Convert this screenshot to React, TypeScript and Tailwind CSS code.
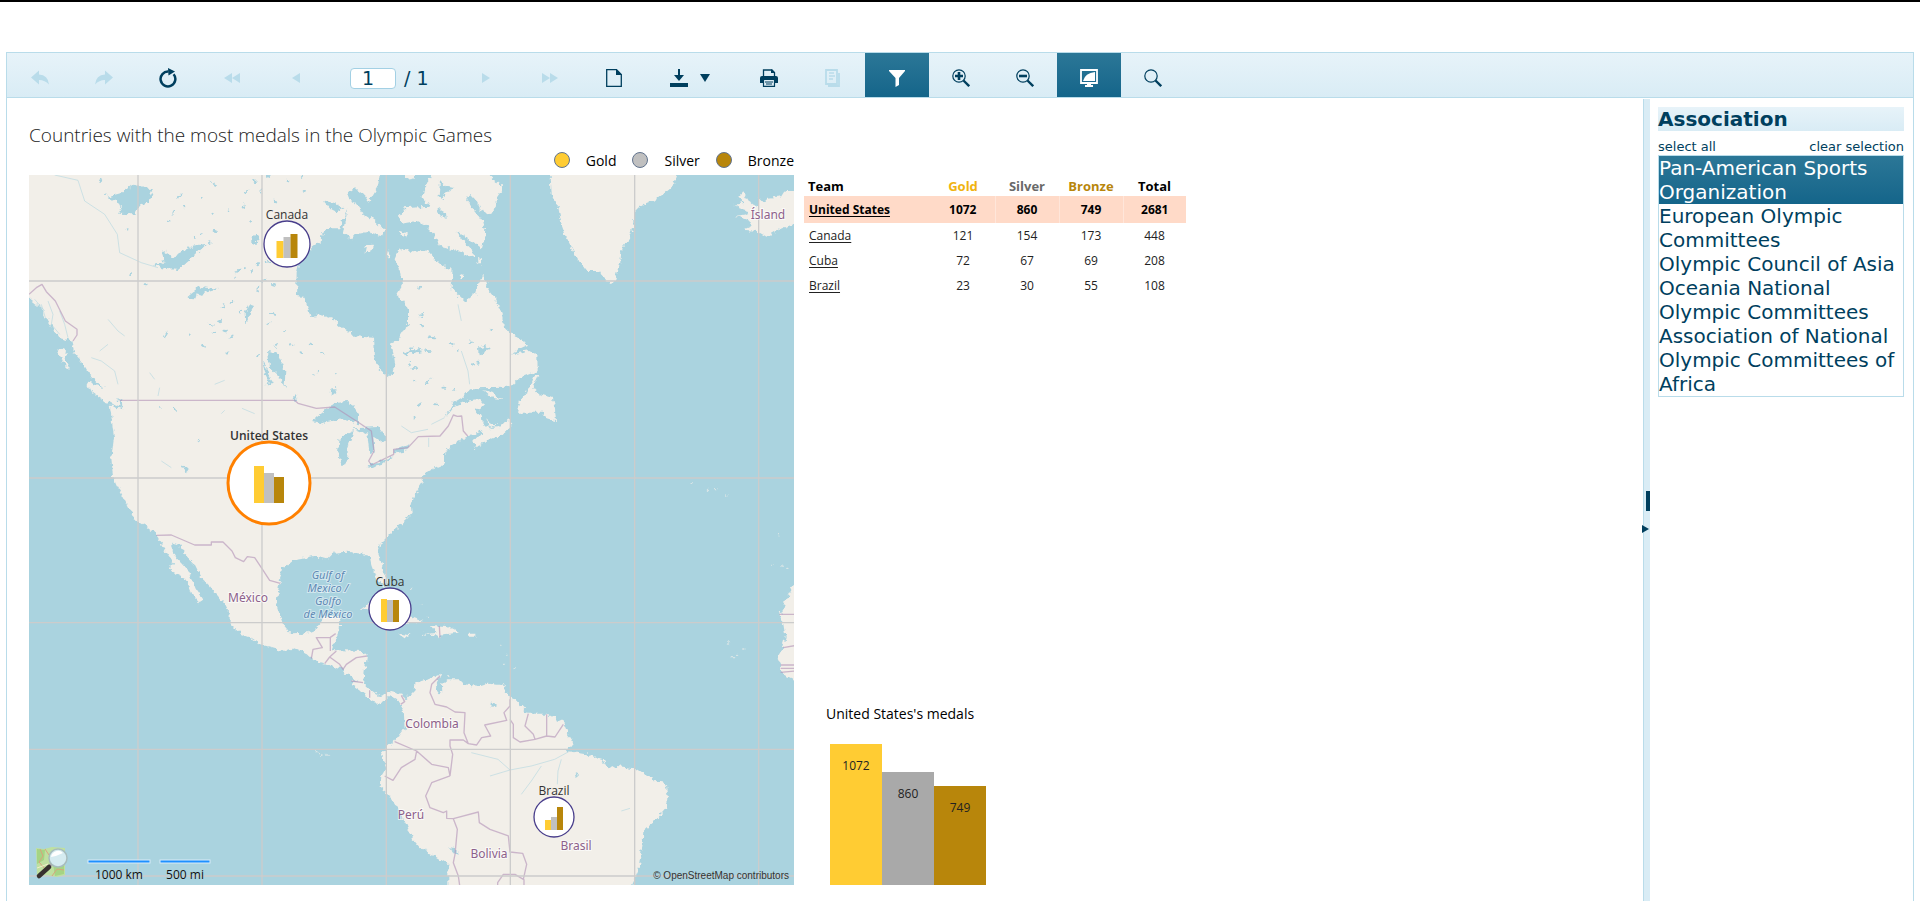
import type { ReactNode } from "react";
import { clsx } from "clsx";

const associations = [
  "Pan-American Sports Organization",
  "European Olympic Committees",
  "Olympic Council of Asia",
  "Oceania National Olympic Committees",
  "Association of National Olympic Committees of Africa",
];

const teams = [
  { name: "United States", gold: 1072, silver: 860, bronze: 749, total: 2681 },
  { name: "Canada", gold: 121, silver: 154, bronze: 173, total: 448 },
  { name: "Cuba", gold: 72, silver: 67, bronze: 69, total: 208 },
  { name: "Brazil", gold: 23, silver: 30, bronze: 55, total: 108 },
];

const legend = [
  { label: "Gold", color: "bg-[#ffcc33]" },
  { label: "Silver", color: "bg-[#c0c0c0]" },
  { label: "Bronze", color: "bg-[#b8860b]" },
];

const bars = [
  { value: 1072, color: "bg-[#ffcc33]" },
  { value: 860, color: "bg-[#a9a9a9]" },
  { value: 749, color: "bg-[#b8860b]" },
];

// cx, cy and r are in map pixels, bars are heights in map pixels
const pins = [
  { name: "Canada", cx: 258, cy: 69, r: 23, labelY: 44, base: 83, w: 7, bars: [17, 21, 24] },
  { name: "United States", cx: 240, cy: 308, r: 41, labelY: 265, base: 328, w: 10, bars: [37, 30, 26], selected: true },
  { name: "Cuba", cx: 361, cy: 434, r: 21, labelY: 411, base: 447, w: 6, bars: [23, 22, 22] },
  { name: "Brazil", cx: 525, cy: 642, r: 20, labelY: 620, base: 655, w: 6, bars: [10, 13, 23] },
];

const places = [
  { name: "Ísland", x: 739, y: 44 },
  { name: "México", x: 219, y: 427 },
  { name: "Colombia", x: 403, y: 553 },
  { name: "Perú", x: 382, y: 644 },
  { name: "Bolivia", x: 460, y: 683 },
  { name: "Brasil", x: 547, y: 675 },
];

const gulf = ["Gulf of", "Mexico /", "Golfo", "de México"];

const land = [
  // mainland
  "M-30,-20 L1058,-20 1055,12 1050,45 1022,92 1008,72 985,55 958,65 972,98 958,112 945,150 933,172 903,172 880,190 878,215 850,225 818,262 806,310 804,375 830,378 847,435 880,430 912,440 950,476 985,496 1035,500 1038,560 1055,595 1082,618 1103,590 1098,555 1088,515 1112,505 1140,460 1140,415 1128,390 1105,375 1125,340 1120,310 1100,265 1110,240 1116,235 1156,241 1196,235 1236,280 1273,300 1271,355 1311,393 1341,370 1356,330 1364,308 1378,350 1401,380 1421,430 1428,465 1446,485 1476,505 1504,520 1481,530 1451,550 1501,540 1528,555 1529,600 1476,620 1446,650 1326,652 1301,680 1276,695 1251,740 1281,705 1316,690 1356,683 1371,700 1356,715 1336,712 1361,735 1364,755 1381,772 1416,768 1441,742 1451,765 1426,790 1376,810 1346,832 1336,815 1366,780 1321,795 1266,825 1251,850 1251,880 1216,895 1186,912 1181,940 1161,970 1151,1000 1154,1025 1136,1045 1120,1060 1090,1085 1060,1115 1050,1145 1065,1190 1077,1230 1065,1248 1045,1220 1030,1180 1025,1155 1000,1148 960,1142 915,1145 895,1165 860,1155 800,1165 762,1195 752,1250 745,1300 765,1360 790,1390 830,1388 865,1375 880,1355 885,1335 938,1335 935,1375 920,1410 910,1438 950,1438 1000,1440 1017,1455 1010,1500 1005,1535 1030,1560 1050,1575 1090,1560 1120,1568 1132,1588 1160,1558 1162,1540 1180,1530 1201,1525 1240,1508 1226,1535 1232,1550 1261,1525 1291,1525 1306,1540 1356,1545 1376,1538 1421,1542 1436,1560 1441,1575 1461,1585 1486,1610 1501,1628 1556,1628 1606,1655 1621,1690 1638,1715 1616,1740 1676,1750 1726,1765 1741,1795 1766,1785 1821,1792 1881,1830 1911,1835 1921,1880 1916,1910 1881,1950 1846,1980 1844,2020 1838,2050 1831,2100 1800,2170 1261,2170 1261,2080 1236,2065 1176,2030 1151,2000 1136,1960 1110,1915 1080,1868 1058,1850 1060,1815 1075,1790 1062,1750 1075,1730 1100,1710 1130,1670 1127,1615 1112,1590 1085,1575 1062,1600 1030,1590 1000,1562 975,1545 970,1525 940,1492 900,1480 860,1470 830,1445 800,1430 770,1440 700,1420 670,1400 640,1390 605,1360 605,1330 590,1300 540,1240 520,1220 500,1180 470,1150 455,1120 430,1115 430,1130 445,1160 480,1200 500,1250 527,1290 517,1298 490,1270 470,1220 430,1200 425,1185 437,1178 410,1140 400,1110 385,1090 345,1060 320,1045 290,985 265,940 255,915 250,860 258,800 248,720 245,703 283,715 282,690 255,675 215,640 180,605 165,580 140,550 130,510 90,500 60,450 40,410 3,380 -30,370Z",
  // baffin and its neighbours
  "M1221,-20 L1366,-20 1390,20 1426,50 1406,80 1406,100 1386,130 1356,115 1341,85 1326,68 1314,88 1341,120 1366,155 1374,190 1361,235 1316,200 1284,180 1301,205 1336,240 1340,258 1276,235 1236,225 1221,195 1196,165 1166,150 1120,158 1113,135 1130,112 1190,108 1206,108 1181,75Z",
  "M960,98 L978,90 1005,125 1040,150 1070,180 1058,195 1020,183 985,190 972,205 945,182 955,130Z",
  "M1015,220 L1040,218 1030,240 1010,245Z M1080,238 L1090,252 1082,268 1076,255Z M1130,0 L1165,0 1160,20 1135,24Z M1040,170 L1060,172 1058,188 1044,186Z",
  "M1116,180 l22,8 -4,8 -18,-6Z M1350,262 l12,4 -2,12 -8,-4Z M1296,312 l8,-4 -2,12 -8,2Z",
  // greenland, iceland
  "M1566,-20 L1950,-20 1948,12 1936,45 1886,85 1836,105 1816,125 1816,170 1806,200 1781,230 1776,280 1761,330 1748,336 1726,320 1716,300 1676,300 1656,275 1631,230 1616,200 1601,160 1591,110 1571,70Z",
  "M2330,60 L2271,60 2261,76 2221,80 2206,96 2191,80 2186,110 2166,95 2146,64 2131,80 2151,95 2116,102 2151,115 2161,130 2124,134 2161,147 2171,165 2146,176 2186,180 2216,197 2246,180 2281,165 2330,150Z",
  // newfoundland, anticosti, prince edward
  "M1521,612 L1534,612 1516,650 1536,670 1571,680 1581,715 1584,750 1556,742 1546,725 1466,725 1476,690 1496,665 1511,635Z",
  "M1366,658 L1396,665 1420,684 1391,680Z M1371,745 L1392,762 1410,762 1386,770Z",
  // vancouver, haida gwaii
  "M176,634 L230,652 272,688 275,706 232,692 190,662Z M88,532 L114,538 110,565 127,598 105,577Z",
  // caribbean
  "M995,1317 L1020,1300 1090,1315 1150,1337 1186,1350 1140,1358 1080,1332 1020,1315Z M1110,1388 L1148,1393 1130,1402Z",
  "M1181,1390 L1226,1386 1206,1362 1256,1365 1296,1385 1246,1390 1236,1402 1221,1392Z M1317,1388 h28 v9 h-28Z",
  // africa
  "M2330,1200 L2298,1240 2276,1280 2266,1310 2254,1330 2266,1360 2273,1400 2261,1440 2249,1460 2258,1480 2261,1505 2281,1520 2330,1545Z",
];

const lakes = [
  "M238,77 L280,66 318,38 345,52 378,55 362,92 340,100 315,130 270,128 285,105 248,84Z",
  "M375,280 L402,292 450,297 482,270 537,218 495,224 450,248 440,262 400,235 412,270Z",
  "M475,380 L520,345 570,355 520,368 500,382Z",
  "M652,458 L678,405 664,400 650,430Z M720,540 L748,545 772,600 770,648 750,612 726,590Z M702,570 l10,40 15,30 5,0 -15,-45Z",
  "M852,750 L900,712 925,692 962,690 990,730 990,757 940,745 880,757Z",
  "M935,800 L978,780 960,830 955,880 937,882 930,840Z",
  "M978,772 L1050,768 1076,800 1060,812 1036,797 1040,848 1025,852 1018,790Z",
  "M1018,885 L1060,868 1097,853 1060,882 1030,890Z M1095,838 L1145,820 1130,842 1100,847Z",
  "M885,88 L920,96 945,112 925,122 905,112Z M910,652 l14,0 4,14 -10,8 -10,-6Z",
  "M948,1508 L965,1512 988,1532 968,1528Z M1225,1540 L1242,1542 1243,1564 1234,1570 1224,1556Z",
  "M1264,2028 L1280,2032 1290,2048 1276,2044Z M460,880 L478,892 482,904 466,898Z",
  "M1236,30 l12,14 32,8 -24,8 -14,24 -10,-8Z M1228,112 l26,14 2,18 -20,-8Z",
  "M1350,530 l20,-6 16,12 -34,14Z M1124,545 l24,-8 38,2 -50,14Z M1191,635 l22,-16 -18,26Z",
  "M1392,1592 l12,0 -2,16 -12,-2Z M1640,1808 l10,4 -4,16Z M670,200 l20,-8 -4,30 -16,-4Z",
];

// small lakes of the canadian shield: x, y, width
const ponds = [
  [216, 30, 10], [232, 72, 8], [300, 175, 9], [308, 308, 10], [354, 340, 10], [435, 125, 14], [420, 150, 10], [470, 108, 12],
  [455, 75, 18], [560, 40, 16], [552, 130, 12], [563, 180, 14], [520, 85, 10], [520, 190, 16], [500, 200, 14], [545, 215, 12],
  [600, 118, 8], [645, 105, 12], [655, 60, 14], [665, 150, 12], [680, 30, 12], [700, 60, 14], [720, 15, 20], [740, 90, 12],
  [630, 300, 18], [622, 320, 12], [672, 300, 20], [690, 280, 14], [720, 275, 16], [705, 330, 22], [738, 340, 14], [690, 355, 12],
  [610, 390, 12], [585, 405, 12], [575, 450, 16], [548, 462, 14], [640, 420, 12], [590, 480, 14], [612, 498, 20], [560, 485, 12],
  [415, 490, 26], [484, 494, 8], [525, 525, 14], [600, 545, 10], [735, 430, 20], [722, 455, 14], [770, 480, 10], [745, 520, 16],
  [790, 520, 14], [820, 545, 12], [850, 520, 10], [880, 545, 14], [690, 555, 16], [720, 640, 14], [802, 680, 22], [855, 610, 10],
  [440, 716, 8], [512, 810, 8], [400, 708, 8], [870, 600, 8], [925, 610, 8], [1175, 350, 14], [1180, 430, 18], [1182, 466, 16],
  [1150, 530, 16], [1210, 500, 24], [1172, 535, 20], [1200, 540, 18], [1145, 580, 14], [1160, 590, 16], [1270, 520, 24], [1290, 535, 12],
  [1330, 515, 10], [1360, 545, 22], [1350, 575, 10], [1335, 580, 8], [1388, 475, 8], [1160, 630, 10], [1175, 700, 16], [1224, 700, 12],
  [1280, 655, 12], [1250, 650, 14], [1160, 740, 8], [1180, 440, 10], [780, 30, 12], [820, 20, 10], [830, 60, 12], [650, 295, 8],
];

const rivers = [
  "M80,12 L150,28 170,90 230,130 268,190 275,245 340,275 390,290",
  "M240,445 L270,480 290,495 M215,540 L240,520 M60,390 L75,430 70,460 95,490 M40,400 L55,450 M95,420 L110,460 120,500 M20,385 L50,420",
  "M270,640 L260,600 220,570 190,560 M365,605 L380,625 M390,675 L395,650 M560,640 L590,628 M590,718 L580,728 M642,712 L680,728",
  "M1626,1740 L1580,1765 1510,1785 1446,1797 1386,1815 M1446,1797 L1410,1765 1330,1745 M1540,1785 L1510,1830 1480,1870 M1600,1765 L1590,1800 1588,1840 M1780,1920 l26,-8",
  "M1250,740 L1210,760 M1120,765 L1150,785 1200,775 M1202,800 v28 M1290,400 L1300,450 M1300,540 L1320,600 1325,640 M400,870 L430,890",
];

const borders = [
  "M3,370 L25,350 42,340 55,362 82,390 112,450 147,475 147,492 135,510",
  "M275,688 H800 L810,697 865,712 920,708 985,750 1030,780 1038,840 1022,870 1030,882 1097,850 1097,835 1140,830 1171,797 1236,795 1261,765 1276,732 1288,736 1301,735 1306,780 1319,795",
  "M385,1093 L430,1092 500,1122 550,1122 550,1113 585,1113 612,1140 622,1160 647,1172 658,1157 680,1160 700,1190 725,1228 757,1237",
  "M850,1463 L855,1435 883,1430 865,1400 873,1400 907,1399 907,1440 M907,1399 L923,1388 M890,1478 L905,1458 935,1480 945,1495 955,1480 985,1460 1017,1455 M905,1458 L925,1440 M970,1530 L1005,1535 M1025,1558 V1580 M1118,1600 L1130,1592 1120,1573",
  "M1236,1515 L1211,1540 1206,1565 1221,1600 1256,1608 1281,1623 1311,1625 1308,1685 1321,1718 1346,1722 1361,1700 1388,1695 1370,1662 1436,1648 1428,1625 1446,1605 1446,1585",
  "M1321,1718 L1306,1707 1266,1707 1266,1725 1274,1750 1266,1815 M1100,1712 L1166,1740 1211,1780 1261,1790 1266,1815 M1166,1740 L1161,1765 1120,1790 1095,1828 1070,1815",
  "M1266,1815 L1211,1835 1193,1875 1206,1910 1246,1925 1256,1920 1256,1942 1276,1943 1288,1975 1281,2050 1276,2075 1291,2115 1296,2150",
  "M1276,1943 L1351,1923 1354,1955 1386,1975 1441,1995 1446,2043 1484,2047 1496,2080 1486,2125 1461,2110 1426,2110 1409,2135 1409,2150 M1488,2125 V2150",
  "M1446,1645 L1456,1660 1456,1700 1476,1713 1521,1705 1516,1690 1491,1665 1501,1628 M1521,1705 L1556,1695 1556,1630 M1556,1695 L1581,1698 1606,1660 M1234,1365 L1236,1400",
  "M2254,1330 H2300 M2266,1430 L2300,1424 M2258,1482 H2300 M2258,1492 H2300 M2258,1504 L2300,1500",
];

const specks = [
  [1988, 935], [2040, 958], [2062, 953], [2095, 975], [2253, 1091], [2236, 1180], [2260, 1188], [2278, 1195], [2100, 1416], [2130, 1453],
  [2146, 1434], [2115, 1457], [1420, 1420], [1432, 1450], [1430, 1480], [1460, 1490], [1426, 1541], [1264, 1514], [868, 1745], [880, 1750],
  [900, 1752], [1150, 1255], [1180, 1300], [1200, 1336], [1210, 1390], [1130, 1232], [1188, 1390],
];

function WorldMap() {
  return (
    <svg viewBox="0 0 765 710" className="block w-full bg-[#aad3df]" role="img" aria-label="Medals by country">
      <defs>
        <filter id="coast" x="0" y="0" width="100%" height="100%">
          <feTurbulence type="fractalNoise" baseFrequency="0.07" numOctaves="2" seed="4" />
          <feDisplacementMap in="SourceGraphic" scale="20" xChannelSelector="R" yChannelSelector="G" />
        </filter>
      </defs>
      <g transform="scale(0.33333) translate(-3 -12)">
        <g filter="url(#coast)">
          <path d={land.join(" ")} fill="#f2efe9" />
          <path d={lakes.join(" ")} fill="#aad3df" />
          {ponds.map(([x, y, w], i) => (
            <ellipse key={i} cx={x} cy={y} rx={w / 2} ry="3" fill="#aad3df" transform={`rotate(${(i * 47) % 110 - 70} ${x} ${y})`} />
          ))}
          {specks.map(([x, y], i) => (
            <ellipse key={i} cx={x} cy={y} rx="4" ry="2" fill="#f2efe9" opacity="0.7" />
          ))}
        </g>
        <path d={rivers.join(" ")} fill="none" stroke="#aad3df" strokeWidth="2" opacity="0.8" />
        <path d={borders.join(" ")} fill="none" stroke="#b08fb5" strokeWidth="4" strokeLinejoin="round" opacity="0.6" />
        <path
          d="M330,0V2150M702,0V2150M1075,0V2150M1447,0V2150M1820,0V2150M2192,0V2150M0,330H2300M0,921H2300M0,1355H2300M0,1735H2300M0,2115H2300"
          stroke="#cccccc"
          strokeWidth="4"
        />
      </g>

      <g
        textAnchor="middle"
        className="font-['Noto_Sans'] text-[12px] [paint-order:stroke]"
        fill="#8d618b"
        stroke="#ffffffaa"
        strokeWidth="2"
      >
        {places.map((p) => (
          <text key={p.name} x={p.x} y={p.y}>{p.name}</text>
        ))}
      </g>
      <g
        textAnchor="middle"
        className="font-['Noto_Sans'] text-[11px] italic [paint-order:stroke]"
        fill="#5f8ab5"
        stroke="#ffffff77"
        strokeWidth="2"
      >
        {gulf.map((line, i) => (
          <text key={line} x="299" y={404 + i * 13}>{line}</text>
        ))}
      </g>

      {pins.map((p) => (
        <g key={p.name}>
          <text
            x={p.cx}
            y={p.labelY}
            textAnchor="middle"
            fill="#333333"
            className={clsx("font-['Open_Sans'] text-[12px]", p.selected && "font-semibold")}
          >
            {p.name}
          </text>
          <circle cx={p.cx} cy={p.cy} r={p.r} fill="#ffffff" stroke={p.selected ? "#ff8000" : "#483d8b"} strokeWidth={p.selected ? 3 : 1.3} />
          {p.bars.map((h, i) => (
            <rect
              key={i}
              x={p.cx + (i - 1.5) * p.w}
              y={p.base - h}
              width={p.w}
              height={h}
              fill={["#ffcc33", "#c0c0c0", "#b8860b"][i]}
            />
          ))}
        </g>
      ))}

      <g transform="translate(6 671)">
        <path d="M1 2 L9 3 17 1 30 2 30 29 22 31 12 29 2 30Z" fill="#bfe0a0" />
        <path d="M2 3 L10 4 9 14 2 18Z M18 18 L29 16 29 28 20 30Z" fill="#a5d484" />
        <path d="M5 3 L8 10 4 16 10 23 M10 3 L14 9 M17 30 L22 23 29 24" fill="none" stroke="#d9a37c" />
        <path d="M2 22 L13 18 M20 3 L24 9" fill="none" stroke="#f2efc9" />
        <circle cx="23" cy="12" r="9" fill="#d5ebf0" stroke="#a7bcbd" strokeWidth="1.5" />
        <path d="M16 11 A7 7 0 0 1 28 7 Q22 10 16 11Z" fill="#ffffff" />
        <path d="M16.500 18.500 L13 21.500" stroke="#aaaaaa" strokeWidth="3" />
        <path d="M14 21 L4 30" stroke="#38312f" strokeWidth="4.500" strokeLinecap="round" />
      </g>
      <g fill="#1e90ff" stroke="#d7ecfa" strokeWidth="1">
        <rect x="59" y="685" width="62" height="3" />
        <rect x="131" y="685" width="50" height="3" />
      </g>
      <g textAnchor="middle" fill="#111111" className="font-['Open_Sans'] text-[12px]">
        <text x="90" y="704">1000 km</text>
        <text x="156" y="704">500 mi</text>
      </g>
      <text x="760" y="704" textAnchor="end" fill="#333333" className="font-['Liberation_Sans'] text-[10px]">
        © OpenStreetMap contributors
      </text>
    </svg>
  );
}

function Icon({ children }: { children: ReactNode }) {
  return (
    <svg width="18" height="18" viewBox="0 0 18 18" fill="currentColor" aria-hidden="true">
      {children}
    </svg>
  );
}

function ToolButton({
  label,
  disabled,
  active,
  wide,
  children,
}: {
  label: string;
  disabled?: boolean;
  active?: boolean;
  wide?: boolean;
  children: ReactNode;
}) {
  return (
    <button
      type="button"
      aria-label={label}
      disabled={disabled}
      className={clsx(
        "flex h-11 items-center justify-center pt-1.5",
        wide ? "w-[91px] gap-3 pr-1" : "w-16",
        disabled && "text-[#b9dcea]",
        active && "bg-linear-to-b from-[#2b7797] to-[#14658a] text-white"
      )}
    >
      {children}
    </button>
  );
}

function Lens() {
  return (
    <>
      <circle cx="7" cy="7" r="6.200" fill="none" stroke="currentColor" strokeWidth="1.200" />
      <path d="M11.500 11.500 L17.200 17.200" stroke="currentColor" strokeWidth="2.400" />
    </>
  );
}

function Toolbar() {
  return (
    <div
      role="toolbar"
      className="flex items-center border-b border-[#b9dcea] bg-linear-to-b from-[#e7f3f9] to-[#d9ecf5] pl-px"
    >
      <ToolButton label="Undo" disabled>
        <Icon>
          <path d="M0 8.500 L8 1.500 V5.500 Q17 6 18 15.500 Q14 11 8 11 V15.500Z" />
        </Icon>
      </ToolButton>
      <ToolButton label="Redo" disabled>
        <Icon>
          <path d="M18 8.500 L10 1.500 V5.500 Q1 6 0 15.500 Q4 11 10 11 V15.500Z" />
        </Icon>
      </ToolButton>
      <ToolButton label="Refresh">
        <svg width="18" height="20" viewBox="0 0 18 20" fill="currentColor" aria-hidden="true">
          <path d="M14.600 6.200 A7.400 7.400 0 1 1 9.500 3.600" fill="none" stroke="currentColor" strokeWidth="2.500" />
          <path d="M9 0 L16 3.500 9.500 7.500Z" />
        </svg>
      </ToolButton>
      <ToolButton label="First page" disabled>
        <Icon>
          <path d="M1 9 L9 4 V14Z M9 9 L17 4 V14Z" />
        </Icon>
      </ToolButton>
      <ToolButton label="Previous page" disabled>
        <Icon>
          <path d="M5 9 L13 4 V14Z" />
        </Icon>
      </ToolButton>
      <div className="flex w-[126px] items-center gap-2 pt-1.5 pl-[22px] text-[19px] leading-5">
        <input
          aria-label="Page number"
          defaultValue="1"
          className="h-[21px] w-[46px] rounded border border-[#a3d0e4] bg-white pl-[11px]"
        />
        <span>/ 1</span>
      </div>
      <ToolButton label="Next page" disabled>
        <Icon>
          <path d="M13 9 L5 4 V14Z" />
        </Icon>
      </ToolButton>
      <ToolButton label="Last page" disabled>
        <Icon>
          <path d="M17 9 L9 4 V14Z M9 9 L1 4 V14Z" />
        </Icon>
      </ToolButton>
      <ToolButton label="Page layout">
        <Icon>
          <path d="M1.700 .7 H11.500 L16.300 5.500 V17.300 H1.700Z" fill="none" stroke="currentColor" strokeWidth="1.300" />
          <path d="M11 0 L17 6 H11Z" />
        </Icon>
      </ToolButton>
      <ToolButton label="Export" wide>
        <Icon>
          <path d="M0 14 H18 V18 H0Z M8 0 H10 V6 H14 L9 12 4 6 H8Z" />
        </Icon>
        <svg width="10" height="18" viewBox="0 0 10 18" fill="currentColor" aria-hidden="true">
          <path d="M0 5 H10 L5 13Z" />
        </svg>
      </ToolButton>
      <ToolButton label="Print">
        <Icon>
          <path d="M3.500 7 V1 H12 L14.500 3.500 V7" fill="none" stroke="currentColor" strokeWidth="1.300" />
          <path d="M11 0 L15 4 H11Z M2 7 H16 Q18 7 18 9 V14 H15 V11 H3 V14 H0 V9 Q0 7 2 7Z" />
          <path d="M3.500 11 V17.300 H14.500 V11 M5 13 H13 M6 15 H12" fill="none" stroke="currentColor" strokeWidth="1.200" />
        </Icon>
      </ToolButton>
      <ToolButton label="Pages" disabled>
        <Icon>
          <path d="M2 1 H13 V15 H2Z M15 4 V17 H4" fill="none" stroke="currentColor" strokeWidth="1.800" />
          <path d="M5 4 H10 M5 7 H11 M5 10 H9" stroke="currentColor" strokeWidth="1.300" />
        </Icon>
      </ToolButton>
      <ToolButton label="Filter" active>
        <Icon>
          <path d="M1 1 H17 V2 L11 9 V16 L7.500 18 V9 L1 2Z" />
        </Icon>
      </ToolButton>
      <ToolButton label="Zoom in">
        <Icon>
          <Lens />
          <path d="M3 7 H11 M7 3 V11" stroke="currentColor" strokeWidth="2.600" />
        </Icon>
      </ToolButton>
      <ToolButton label="Zoom out">
        <Icon>
          <Lens />
          <path d="M3 7 H11" stroke="currentColor" strokeWidth="2.600" />
        </Icon>
      </ToolButton>
      <ToolButton label="Full screen" active>
        <Icon>
          <path d="M1 1 H17 V14 H1Z" fill="none" stroke="currentColor" strokeWidth="1.800" />
          <path d="M3 12 Q5 4 15 3 V12Z M7 14 H11 V16 H13 V18 H5 V16 H7Z" />
        </Icon>
      </ToolButton>
      <ToolButton label="Search">
        <Icon>
          <Lens />
        </Icon>
      </ToolButton>
    </div>
  );
}

function MedalTable() {
  return (
    <table className="w-[382px] table-fixed border-collapse text-center text-[12px] text-[#222222]">
      <thead>
        <tr className="h-5 text-[13px] leading-5">
          <th className="w-[127px] pl-1 text-left text-black">Team</th>
          <th className="w-16 text-[#f0b310]">Gold</th>
          <th className="w-16 text-[#696969]">Silver</th>
          <th className="w-16 text-[#b8860b]">Bronze</th>
          <th className="text-black">Total</th>
        </tr>
      </thead>
      <tbody>
        {teams.map((t, i) => (
          <tr
            key={t.name}
            className={clsx(
              i === 0 ? "h-[27px] bg-[#ffdac8] font-bold text-black [&>td+td+td]:border-l [&>td+td+td]:border-[#ffe6da]" : "h-[25px]"
            )}
          >
            <td className="pl-[5px] text-left">
              <a href="#" className="underline underline-offset-2">{t.name}</a>
            </td>
            <td>{t.gold}</td>
            <td>{t.silver}</td>
            <td>{t.bronze}</td>
            <td>{t.total}</td>
          </tr>
        ))}
      </tbody>
    </table>
  );
}

function MedalChart() {
  return (
    <div className="pl-[22px]">
      <h2 className="mb-5 text-sm leading-5">United States's medals</h2>
      <div className="ml-1 flex h-[141px] items-end">
        {bars.map((b) => (
          <div
            key={b.value}
            className={clsx("w-[52px] pt-3 text-center text-[12px] leading-5 text-[#222222]", b.color)}
            style={{ height: `${(b.value / 1072) * 100}%` }}
          >
            {b.value}
          </div>
        ))}
      </div>
    </div>
  );
}

function FilterPanel() {
  return (
    <aside className="w-[263px] shrink-0 pt-[9px] pr-[9px] pl-2">
      <h2 className="bg-linear-to-b from-[#e7f3f9] to-[#d9ecf5] text-xl leading-6 font-bold">Association</h2>
      <div className="flex items-end justify-between pt-2 text-[13px] leading-4">
        <button type="button">select all</button>
        <button type="button">clear selection</button>
      </div>
      <ul className="border border-[#b9dcea]">
        {associations.map((name, i) => (
          <li key={name}>
            <button
              type="button"
              aria-pressed={i === 0}
              className={clsx(
                "block w-full text-left text-xl leading-6",
                i === 0 && "bg-linear-to-b from-[#2b7797] to-[#14658a] text-white"
              )}
            >
              {name}
            </button>
          </li>
        ))}
      </ul>
    </aside>
  );
}

export default function App() {
  return (
    <div className="flex min-h-screen flex-col border-t-2 border-black bg-white px-[6px] pt-[50px] font-['DejaVu_Sans',sans-serif] text-[#003f5e]">
      <div className="flex flex-1 flex-col border-x border-t border-[#b9dcea]">
        <Toolbar />
        <div className="flex flex-1">
          <main className="flex-1 pt-[23px] pl-[22px] font-['Open_Sans',sans-serif] text-black">
            <h1 className="text-[19px] leading-7 font-light text-[#222222]">
              Countries with the most medals in the Olympic Games
            </h1>
            <div className="flex">
              <div className="w-[765px] shrink-0">
                <div className="flex h-[26px] items-start justify-end gap-4 text-sm">
                  {legend.map((l) => (
                    <span key={l.label} className="flex items-start gap-4">
                      <span className={clsx("mt-[3px] size-4 rounded-full border border-slate-500", l.color)} />
                      <span className="leading-6">{l.label}</span>
                    </span>
                  ))}
                </div>
                <WorldMap />
              </div>
              <div className="flex flex-col justify-between pt-[27px] pl-[10px]">
                <MedalTable />
                <MedalChart />
              </div>
            </div>
          </main>
          <div className="relative mt-px w-[7px] shrink-0 border-l border-[#b9dcea] bg-[#d9ecf5]">
            <span className="absolute top-[392px] right-0 h-5 w-1 bg-[#003f5e]" />
            <svg className="absolute top-[426px] -left-[2px]" width="7" height="8" viewBox="0 0 7 8" aria-hidden="true">
              <path d="M0 0 L7 4 0 8Z" fill="#003f5e" />
            </svg>
          </div>
          <FilterPanel />
        </div>
      </div>
    </div>
  );
}
